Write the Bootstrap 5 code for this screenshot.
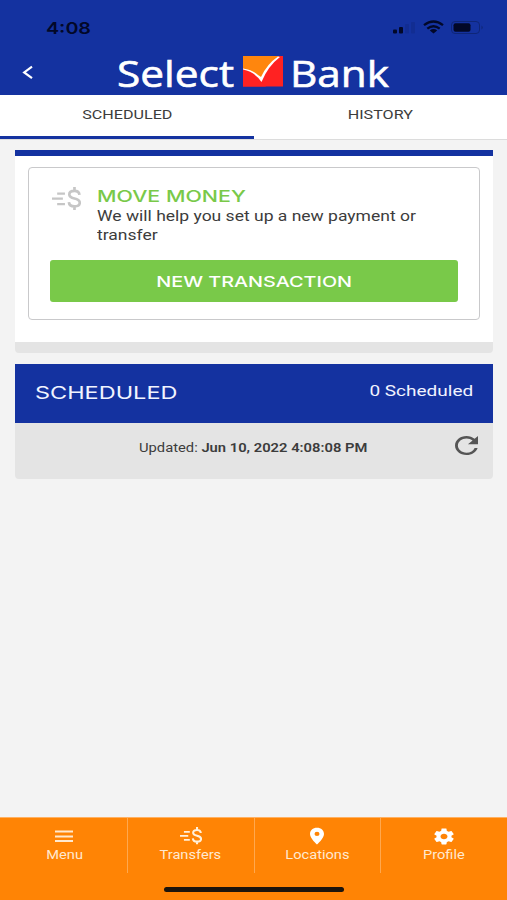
<!DOCTYPE html>
<html lang="en">
<head>
<meta charset="utf-8">
<meta name="viewport" content="width=device-width, initial-scale=1">
<title>Select Bank</title>
<link href="https://cdn.jsdelivr.net/npm/bootstrap@5.3.0/dist/css/bootstrap.min.css" rel="stylesheet">
<style>
:root { --brand: #1432a0; --accent: #79c949; --bar: #ff8405; --ink: #3c3c3c; }
html, body { height: 100%; }
body { background: #f3f3f3; color: var(--ink); font-family: Roboto, "Liberation Sans", sans-serif; font-size: 14px; }
svg { display: block; flex: none; }
.screen { height: 900px; overflow: hidden; }
.bg-brand { background: var(--brand); }
.wide { display: inline-block; white-space: nowrap; transform: scaleX(var(--w, 1.2)); }
.wide-start { transform-origin: left; }
.wide-end { transform-origin: right; }
.display-face { font-family: Inter, "Liberation Sans", sans-serif; }
.app-header { height: 95px; padding: 20px 22px 0 22px; }
.clock { --w: 1.23; font: 600 16px/16px Inter, sans-serif; color: #020828; margin-left: 24px; }
.logo { margin-left: 70px; }
.tabs { height: 45px; background: #fff; border-bottom: 1px solid #dcdcdc; }
.tabs a { --w: 1.24; font-size: 13px; line-height: 20px; padding: 10px 0 0 1px; color: var(--ink); text-decoration: none; text-align: center; border-bottom: 3px solid transparent; }
.tabs a.current { border-color: var(--brand); }
.panel-a { margin: 10px 14px 0 15px; background: #fff; border-top: 6px solid var(--brand); border-bottom: 11px solid #e4e4e4; border-radius: 0 0 4px 4px; height: 203px; padding: 11px 13px; }
.offer { border: 1px solid #c9c9cb; border-radius: 4px; height: 153px; padding: 18px 21px 0 21px; }
.offer-icon { margin: 1px 16px 0 2px; color: #c6c6c6; }
.offer h2 { font-size: 15.5px; line-height: 21px; font-weight: 500; color: var(--accent); --w: 1.38; }
.offer p { font-size: 14px; line-height: 18.5px; --w: 1.25; }
.new-btn { --w: 1.32; background: var(--accent); color: #fff; height: 42px; border-radius: 3px; font-size: 15px; font-weight: 500; padding: 3px 0 0; border: 0; margin-top: 14px; }
.panel-b { margin: 11px 14px 0 15px; border-radius: 0 0 4px 4px; background: #e4e4e4; height: 115px; overflow: hidden; }
.panel-head { height: 59px; padding: 0 20px 0 20px; color: #f1f4ff; }
.head-title { --w: 1.38; font-size: 17px; }
.head-count { --w: 1.31; font-size: 14.5px; padding-bottom: 4px; }
.status-row { padding: 13px 15px 0 0; }
.stamp { --w: 1.2; font-size: 12.3px; padding-left: 10px; padding-top: 3px; }
.stamp b { font-weight: 600; }
.dock { height: 83px; background: var(--bar); color: #ffe9d0; border-top: 1px solid #ffb061; }
.dock a { --w: 1.17; height: 55px; color: inherit; text-decoration: none; font-size: 12.5px; line-height: 16px; padding: 9px 0 0; }
.dock a:first-child { padding-left: 2px; }
.dock a svg { margin-bottom: 1px; }
.dock a + a { border-left: 1px solid #ffa84e; }
.home-bar { width: 180px; height: 5px; border-radius: 3px; background: #1c140c; margin: 13.5px auto 0; }
</style>
<script src="https://cdn.jsdelivr.net/npm/bootstrap@5.3.0/dist/js/bootstrap.bundle.min.js" defer></script>
</head>
<body>
<svg width="0" height="0" class="position-absolute" aria-hidden="true">
  <symbol id="money" viewBox="0 0 28 22">
    <g fill="none" stroke="currentColor">
      <path d="M5 6.3H12.500M0 11.200H10.500M5 16.300H12.500" stroke-width="2.200"/>
      <path d="M26.500 7.600C26.300 5.200 24.600 3.700 21.700 3.700C18.700 3.700 16.700 5 16.700 7.200C16.700 9.500 18.600 10.300 21.700 11C25 11.700 26.800 12.600 26.800 15C26.800 17.300 24.800 18.500 21.700 18.500C18.500 18.500 16.500 17 16.300 14.400M21.700 0V4M21.700 18V22" stroke-width="2.600"/>
    </g>
  </symbol>
</svg>
<div class="screen d-flex flex-column">
  <header class="app-header bg-brand">
    <div class="d-flex justify-content-between align-items-center">
      <span class="wide wide-start clock">4:08</span>
      <svg width="92" height="16" viewBox="0 0 92 16">
        <g fill="#020828"><rect y="9.500" width="4" height="4" rx="1"/><rect x="6" y="7" width="4" height="6.500" rx="1"/></g>
        <g fill="#122d92"><rect x="12" y="4" width="4" height="9.500" rx="1"/><rect x="18" y="2" width="4" height="11.500" rx="1"/></g>
        <path d="M31 5.200Q40.500-2.200 50 5.200M34.300 8.600Q40.500 3.800 46.700 8.600" fill="none" stroke="#020828" stroke-width="2.300"/>
        <path d="M36.800 10.400Q40.500 7.600 44.200 10.400L40.500 13.500Z" fill="#020828"/>
        <rect x="58.500" y="1.500" width="28" height="12" rx="3.500" fill="none" stroke="#0f2677"/>
        <rect x="60.500" y="3.300" width="17" height="8.400" rx="2" fill="#020828"/>
        <path d="M88.500 5.500Q91 7.500 88.500 9.500Z" fill="#0f2677"/>
      </svg>
    </div>
    <div class="d-flex align-items-start">
      <svg width="12" height="50" viewBox="0 0 12 50"><path d="M10 30.700L2.200 36.400L10 42.100" fill="none" stroke="#fff" stroke-width="2.200"/></svg>
      <svg class="logo" width="300" height="64" viewBox="104 36 300 64" fill="#fff" font-family="'Open Sans','Noto Sans',sans-serif" font-size="36.500">
        <text x="117" y="87" textLength="117" lengthAdjust="spacingAndGlyphs" stroke="#fff" stroke-width=".6">Select</text>
        <rect x="243" y="56" width="40" height="30.500" fill="#f22"/>
        <path d="M243 56H279Q268 64 261 81Q256 71 243 69Z" fill="#ff860d"/>
        <path d="M243 86.500V69Q253 71 261 81L266 86.500Z" fill="#f22"/>
        <path d="M243 68.500Q253 70 258 75L261 77Q267 64 278 56.500L280 57Q268 66 261.500 82Q255 72 243 69.500Z"/>
        <text x="290" y="87" textLength="99" lengthAdjust="spacingAndGlyphs" stroke="#fff" stroke-width=".6">Bank</text>
      </svg>
    </div>
  </header>

  <nav class="tabs d-flex">
    <a href="#" class="w-50 current"><span class="wide">SCHEDULED</span></a>
    <a href="#" class="w-50"><span class="wide">HISTORY</span></a>
  </nav>

  <main class="flex-grow-1">
    <section class="panel-a">
      <div class="offer">
        <div class="d-flex">
          <svg class="offer-icon" width="29" height="23" viewBox="0 0 28 22" preserveAspectRatio="none"><use href="#money"/></svg>
          <div>
            <h2 class="display-face wide wide-start mb-0 d-block">MOVE MONEY</h2>
            <p class="wide wide-start mb-0">We will help you set up a new payment or<br>transfer</p>
          </div>
        </div>
        <button class="btn new-btn w-100 display-face" type="button"><span class="wide">NEW TRANSACTION</span></button>
      </div>
    </section>

    <section class="panel-b">
      <div class="panel-head bg-brand d-flex justify-content-between align-items-center">
        <span class="display-face wide wide-start head-title">SCHEDULED</span>
        <span class="wide wide-end head-count">0 Scheduled</span>
      </div>
      <div class="status-row d-flex align-items-start">
        <div class="flex-grow-1 text-center ps-4"><span class="wide stamp">Updated: <b>Jun 10, 2022 4:08:08 PM</b></span></div>
        <svg width="23" height="19" viewBox="4 4 16 16" preserveAspectRatio="none"><path fill="#555" d="M17.650 6.350C16.200 4.900 14.210 4 12 4c-4.420 0-7.990 3.580-7.990 8s3.570 8 7.990 8c3.730 0 6.840-2.550 7.730-6h-2.080c-.82 2.330-3.040 4-5.650 4-3.310 0-6-2.690-6-6s2.690-6 6-6c1.660 0 3.140.69 4.220 1.780L13 11h7V4l-2.350 2.350z"/></svg>
      </div>
    </section>
  </main>

  <footer class="dock">
    <nav class="d-flex">
      <a href="#" class="w-25 d-flex flex-column align-items-center"><svg width="18" height="19" viewBox="0 0 18 19"><path d="M0 4.500H18M0 9.500H18M0 14H18" stroke="#ffe9d0" stroke-width="2"/></svg><span class="wide">Menu</span></a>
      <a href="#" class="w-25 d-flex flex-column align-items-center"><svg width="22" height="19" viewBox="0 0 28 24" preserveAspectRatio="none" color="#fff0dc"><use href="#money" width="28" height="22"/></svg><span class="wide">Transfers</span></a>
      <a href="#" class="w-25 d-flex flex-column align-items-center"><svg width="16" height="19" viewBox="0 0 16 19"><path d="M8 .8C3.800 .8 1 3.400 1 7C1 11.500 8 17.500 8 17.500S15 11.500 15 7C15 3.400 12.200 .8 8 .8ZM8 4.800A2.500 2.100 0 1 1 8 9A2.500 2.100 0 1 1 8 4.800Z" fill="#fff" fill-rule="evenodd"/></svg><span class="wide">Locations</span></a>
      <a href="#" class="w-25 d-flex flex-column align-items-center"><svg width="24" height="19" viewBox="0 0 24 24" preserveAspectRatio="none"><path fill="#fff" d="M19.430 12.980c.04-.32.07-.64.07-.98s-.03-.66-.07-.98l2.110-1.650c.19-.15.24-.42.12-.64l-2-3.460c-.12-.22-.39-.3-.61-.22l-2.490 1c-.52-.4-1.080-.73-1.690-.98l-.38-2.650C14.460 2.180 14.250 2 14 2h-4c-.25 0-.46.18-.49.42l-.38 2.650c-.61.25-1.170.59-1.690.98l-2.490-1c-.23-.09-.49 0-.61.22l-2 3.460c-.13.22-.07.49.12.64l2.110 1.650c-.04.32-.07.65-.07.98s.03.66.07.98l-2.110 1.650c-.19.15-.24.42-.12.64l2 3.460c.12.22.39.3.61.22l2.490-1c.52.4 1.080.73 1.690.98l.38 2.650c.03.24.24.42.49.42h4c.25 0 .46-.18.49-.42l.38-2.650c.61-.25 1.170-.59 1.690-.98l2.490 1c.23.09.49 0 .61-.22l2-3.460c.12-.22.07-.49-.12-.64l-2.110-1.650zM12 15.500c-1.930 0-3.500-1.570-3.500-3.500s1.570-3.500 3.500-3.500 3.500 1.570 3.500 3.500-1.570 3.500-3.500 3.500z"/></svg><span class="wide">Profile</span></a>
    </nav>
    <div class="home-bar"></div>
  </footer>
</div>
</body>
</html>
